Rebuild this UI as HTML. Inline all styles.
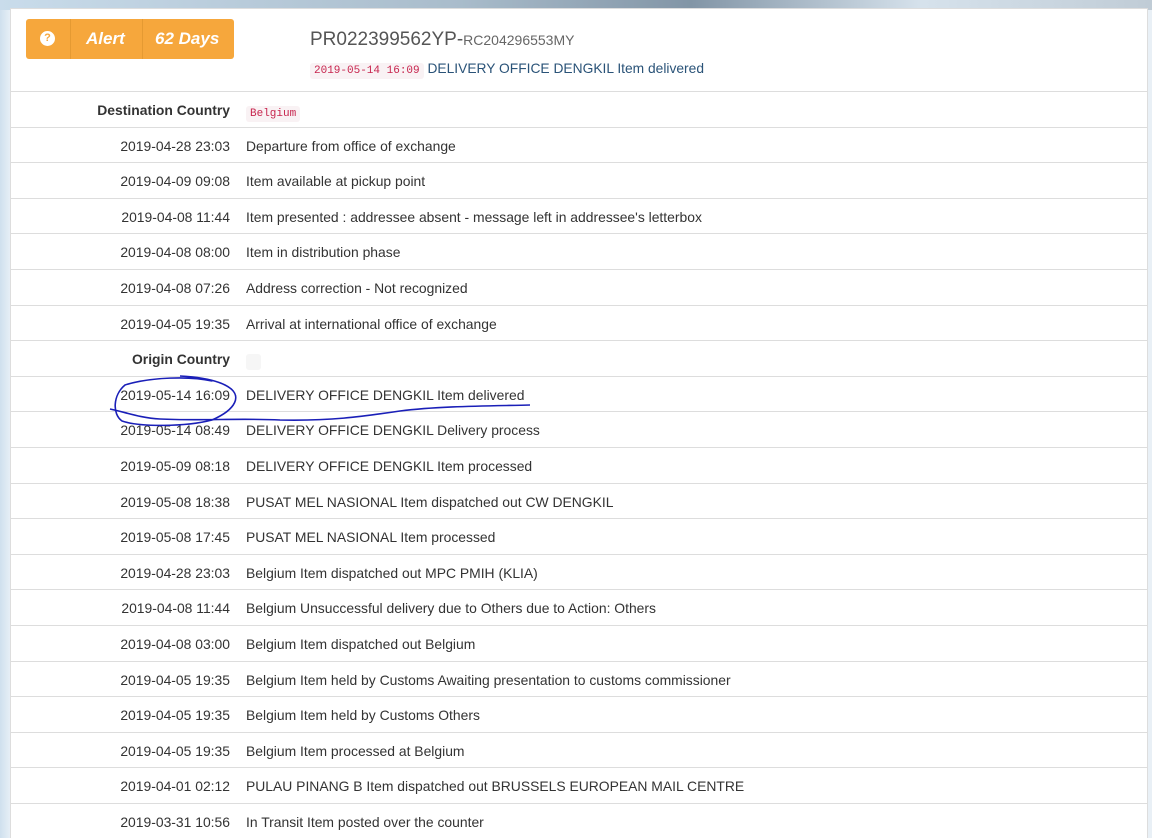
<!DOCTYPE html>
<html><head><meta charset="utf-8"><style>
html,body{margin:0;padding:0;width:1152px;height:838px;overflow:hidden;font-family:"Liberation Sans",sans-serif;}
body{background:linear-gradient(90deg,#cfe0ee 0,#e6eff6 10px,#e9f0f6 100%);position:relative}
.top{position:absolute;left:0;top:0;width:1152px;height:10px;background:linear-gradient(90deg,#c9dceb,#a9bccb 40%,#8295a6 60%,#d6e2ec 80%,#c0ccd6)}
.panel{position:absolute;left:10px;top:8px;width:1138px;height:840px;background:#fff;border:1px solid #ddd;box-sizing:border-box}
.btn{position:absolute;left:26px;top:19px;width:208px;height:40px;background:#f6a73c;border-radius:3px;color:#fff;font-style:italic;font-weight:bold;font-size:17px;line-height:40px}
.btn span{position:absolute;top:0}
.sep{position:absolute;top:0;width:1px;height:40px;background:#e59a32}
.q{position:absolute;left:14px;top:12px;width:15px;height:15px;border-radius:50%;background:#fff;color:#f6a73c;font-size:11px;line-height:15px;text-align:center;font-style:normal}
.track{position:absolute;left:310px;top:29px;font-size:19px;color:#555}
.track small{font-size:14px;color:#666}
.code{font-family:"Liberation Mono",monospace;font-size:11px;color:#c7254e;background:#f9f2f4;padding:2px 4px;border-radius:3px}
.latest{position:absolute;left:310px;top:61px;font-size:13.8px;color:#2a5378}
.row{position:absolute;left:11px;width:1137px;border-top:1px solid #ddd;font-size:13.9px;color:#333}
.row .d{position:absolute;right:918px;top:10px;text-align:right;white-space:nowrap}
.row .t{position:absolute;left:235px;top:10px;white-space:nowrap}
.row b{font-weight:bold}
</style></head><body>
<div class="top"></div>
<div class="panel"></div>
<div class="btn"><div class="q">?</div><div class="sep" style="left:44px"></div><span style="left:60px">Alert</span><div class="sep" style="left:116px"></div><span style="left:129px">62 Days</span></div>
<div class="track">PR022399562YP-<small>RC204296553MY</small></div>
<div class="latest"><span class="code">2019-05-14 16:09</span> DELIVERY OFFICE DENGKIL Item delivered</div>

<div class="row" style="top:91px"><div class="d"><b>Destination Country</b></div><div class="t" style="top:11px"><span class="code">Belgium</span></div></div>
<div class="row" style="top:127px"><div class="d">2019-04-28 23:03</div><div class="t">Departure from office of exchange</div></div>
<div class="row" style="top:162px"><div class="d">2019-04-09 09:08</div><div class="t">Item available at pickup point</div></div>
<div class="row" style="top:198px"><div class="d">2019-04-08 11:44</div><div class="t">Item presented : addressee absent - message left in addressee's letterbox</div></div>
<div class="row" style="top:233px"><div class="d">2019-04-08 08:00</div><div class="t">Item in distribution phase</div></div>
<div class="row" style="top:269px"><div class="d">2019-04-08 07:26</div><div class="t">Address correction - Not recognized</div></div>
<div class="row" style="top:305px"><div class="d">2019-04-05 19:35</div><div class="t">Arrival at international office of exchange</div></div>
<div class="row" style="top:340px"><div class="d"><b>Origin Country</b></div><div class="t"><span class="code" style="background:#f6f6f6">&nbsp;</span></div></div>
<div class="row" style="top:376px"><div class="d">2019-05-14 16:09</div><div class="t">DELIVERY OFFICE DENGKIL Item delivered</div></div>
<div class="row" style="top:411px"><div class="d">2019-05-14 08:49</div><div class="t">DELIVERY OFFICE DENGKIL Delivery process</div></div>
<div class="row" style="top:447px"><div class="d">2019-05-09 08:18</div><div class="t">DELIVERY OFFICE DENGKIL Item processed</div></div>
<div class="row" style="top:483px"><div class="d">2019-05-08 18:38</div><div class="t">PUSAT MEL NASIONAL Item dispatched out CW DENGKIL</div></div>
<div class="row" style="top:518px"><div class="d">2019-05-08 17:45</div><div class="t">PUSAT MEL NASIONAL Item processed</div></div>
<div class="row" style="top:554px"><div class="d">2019-04-28 23:03</div><div class="t">Belgium Item dispatched out MPC PMIH (KLIA)</div></div>
<div class="row" style="top:589px"><div class="d">2019-04-08 11:44</div><div class="t">Belgium Unsuccessful delivery due to Others due to Action: Others</div></div>
<div class="row" style="top:625px"><div class="d">2019-04-08 03:00</div><div class="t">Belgium Item dispatched out Belgium</div></div>
<div class="row" style="top:661px"><div class="d">2019-04-05 19:35</div><div class="t">Belgium Item held by Customs Awaiting presentation to customs commissioner</div></div>
<div class="row" style="top:696px"><div class="d">2019-04-05 19:35</div><div class="t">Belgium Item held by Customs Others</div></div>
<div class="row" style="top:732px"><div class="d">2019-04-05 19:35</div><div class="t">Belgium Item processed at Belgium</div></div>
<div class="row" style="top:767px"><div class="d">2019-04-01 02:12</div><div class="t">PULAU PINANG B Item dispatched out BRUSSELS EUROPEAN MAIL CENTRE</div></div>
<div class="row" style="top:803px"><div class="d">2019-03-31 10:56</div><div class="t">In Transit Item posted over the counter</div></div>

<svg width="1152" height="838" style="position:absolute;left:0;top:0" fill="none" stroke="#1a1fb8" stroke-width="1.6">
<path d="M212 381 C190 376,150 377,125 385 C113 395,112 414,122 421 C140 427,185 427,212 420 C235 410,245 395,225 385 C215 380,200 377,180 376"/>
<path d="M110 409 C125 412,140 418,160 419 C200 421,240 418,280 420 C330 421,360 417,400 411 C440 406,490 406,530 405"/>
</svg>
</body></html>
